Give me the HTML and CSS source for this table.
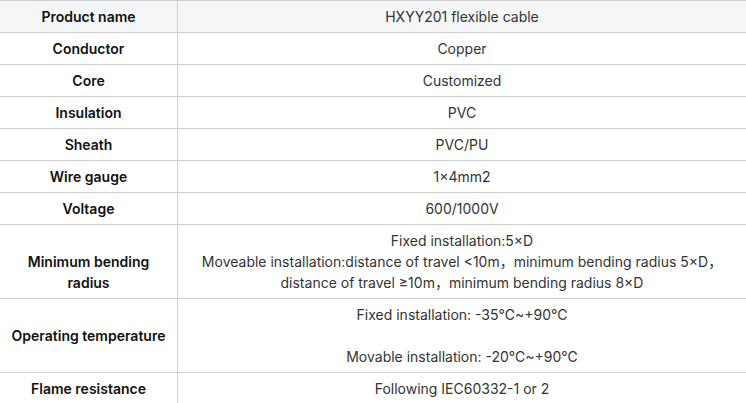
FILE: index.html
```html
<!DOCTYPE html>
<html lang="en">
<head>
<meta charset="utf-8">
<title>HXYY201 flexible cable</title>
<link rel="stylesheet" href="styles.css">
</head>
<body>
<table class="spec">
  <tr class="head">
    <th>Product name</th>
    <td>HXYY201 flexible cable</td>
  </tr>
  <tr>
    <th>Conductor</th>
    <td>Copper</td>
  </tr>
  <tr>
    <th>Core</th>
    <td>Customized</td>
  </tr>
  <tr>
    <th>Insulation</th>
    <td>PVC</td>
  </tr>
  <tr>
    <th>Sheath</th>
    <td>PVC/PU</td>
  </tr>
  <tr>
    <th>Wire gauge</th>
    <td>1×4mm2</td>
  </tr>
  <tr>
    <th>Voltage</th>
    <td>600/1000V</td>
  </tr>
  <tr>
    <th class="bottom">Minimum bending radius</th>
    <td>Fixed installation:5×D<br>Moveable installation:distance of travel &lt;10m<span class="cjk">，</span>minimum bending radius 5×D<span class="cjk">，</span><br>distance of travel ≥10m<span class="cjk">，</span>minimum bending radius 8×D</td>
  </tr>
  <tr>
    <th>Operating temperature</th>
    <td>Fixed installation: -35℃~+90℃<br><br>Movable installation: -20℃~+90℃</td>
  </tr>
  <tr>
    <th>Flame resistance</th>
    <td>Following IEC60332-1 or 2</td>
  </tr>
</table>
</body>
</html>
```

FILE: styles.css
```css
html, body {
  margin: 0;
  padding: 0;
  background: #ffffff;
}

body {
  font-family: Inter, "Noto Sans CJK SC", "Noto Sans", sans-serif;
  font-size: 14px;
  line-height: 21px;
  overflow: hidden;
}

.spec {
  width: 746px;
  border-collapse: collapse;
  table-layout: fixed;
}

.spec th,
.spec td {
  border: 1px solid #cfcfcf;
  padding: 5px 10px;
  text-align: center;
  vertical-align: middle;
}

.spec th {
  width: 157px;
  font-weight: 600;
  color: #111111;
  border-left: none;
}

.spec th.bottom {
  vertical-align: bottom;
}

.spec td {
  font-weight: 400;
  color: #333333;
  border-right: none;
}

.cjk {
  font-family: "Noto Sans CJK SC", sans-serif;
}

.spec .head th,
.spec .head td {
  background: #f5f6f8;
}
```
